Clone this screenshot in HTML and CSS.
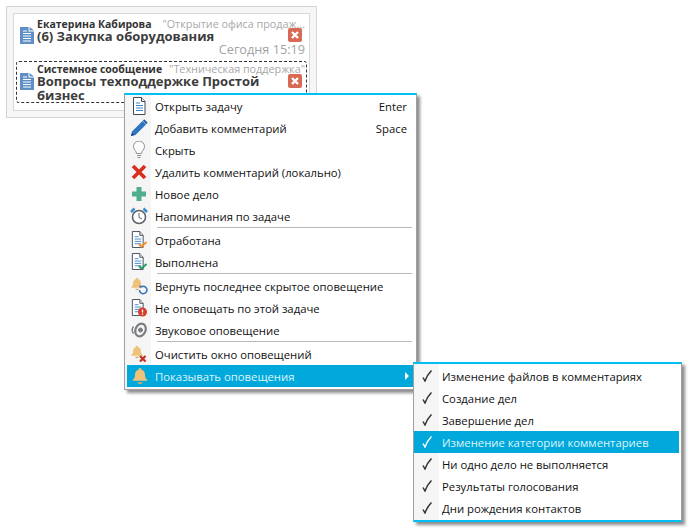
FILE: index.html
```html
<!DOCTYPE html>
<html lang="ru">
<head>
<meta charset="utf-8">
<title>Оповещения</title>
<link rel="stylesheet" href="styles.css">
</head>
<body>
<svg class="defs" width="0" height="0" aria-hidden="true">
  <defs>
    <symbol id="i-sheet" viewBox="0 0 16 18">
      <path d="M2.500.5h8l3.500 4v13h-11.500z" fill="#fff" stroke="#3f4a57"/>
      <path d="M10.500.5v4h3.500" fill="#e6eaf0" stroke="#3f4a57"/>
      <path d="M5 6h4M5 8.500h7M5 11h7M5 13.500h7" stroke="#3f86d0" fill="none"/>
    </symbol>
    <symbol id="i-bell" viewBox="0 0 16 16">
      <path d="M8 1a1.300 1.300 0 0 1 1.300 1.400c2.300.7 3.200 2.600 3.200 5 0 2 .8 3 2 4.100v.8h-13v-.8c1.200-1.100 2-2.100 2-4.100 0-2.400.9-4.300 3.200-5A1.300 1.300 0 0 1 8 1z" fill="#efc27a"/>
      <path d="M6 13.500h4a2 1.700 0 0 1-4 0z" fill="#e2a95c"/>
    </symbol>
    <symbol id="i-doc" viewBox="0 0 14 17">
      <path d="M0 0h8.500v4.500H14V17H0z" fill="#5f8fc4"/>
      <path d="M9.500 0L14 3.500H9.500z" fill="#5f8fc4"/>
      <path d="M3 6.500h8M3 9h8M3 11.500h8M3 14h8" stroke="#fff" fill="none"/>
      <path d="M3 4h4" stroke="#fff" fill="none"/>
    </symbol>
    <symbol id="i-check" viewBox="0 0 10 12">
      <path d="M1 7.500l2 3.500C4.500 7 6.500 3.500 9.500.5" fill="none" stroke="currentColor" stroke-width="1.500"/>
    </symbol>
  </defs>
</svg>

<section class="panel">
  <div class="panel-inner">
    <article class="note">
      <svg class="note-doc"><use href="#i-doc"/></svg>
      <div class="note-body">
        <div class="note-head"><span class="note-author">Екатерина Кабирова</span><span class="note-topic">"Открытие офиса продаж...</span></div>
        <div class="note-title-row"><h3 class="note-title">(6) Закупка оборудования</h3><span class="note-close"><svg viewBox="0 0 14 14"><path d="M4 4l6 6M10 4l-6 6"/></svg></span></div>
        <div class="note-time">Сегодня 15:19</div>
      </div>
    </article>
    <article class="note note-focus">
      <svg class="note-doc"><use href="#i-doc"/></svg>
      <div class="note-body">
        <div class="note-head"><span class="note-author">Системное сообщение</span><span class="note-topic">"Техническая поддержка"</span></div>
        <div class="note-title-row"><h3 class="note-title">Вопросы техподдержке Простой бизнес</h3><span class="note-close"><svg viewBox="0 0 14 14"><path d="M4 4l6 6M10 4l-6 6"/></svg></span></div>
      </div>
    </article>
  </div>
</section>

<nav class="menu">
  <div class="item"><span class="ico"><svg width="16" height="18"><use href="#i-sheet"/></svg></span><span class="label">Открыть задачу</span><span class="key">Enter</span></div>
  <div class="item"><span class="ico"><svg width="18" height="18" viewBox="0 0 18 18"><path d="M1 17l1-4.500L12.500 2l3.500 3.500L5.500 16z" fill="#2f74c0"/><path d="M13.500 1l3.500 3.500" stroke="#1f5a9e" stroke-width="2"/><path d="M1 17l1-3 2 2z" fill="#153a66"/></svg></span><span class="label">Добавить комментарий</span><span class="key">Space</span></div>
  <div class="item"><span class="ico"><svg width="16" height="18" viewBox="0 0 16 18" fill="none" stroke="#8d9296"><path d="M5.500 12.500c0-2.500-3-3.500-3-7a5.500 5.500 0 0 1 11 0c0 3.500-3 4.500-3 7z" fill="#fbfbfb"/><path d="M6 14.500h4M6.500 16.500h3"/></svg></span><span class="label">Скрыть</span></div>
  <div class="item"><span class="ico"><svg width="16" height="16" viewBox="0 0 16 16"><path d="M2 2l12 12M14 2L2 14" stroke="#d8301e" stroke-width="3.600"/></svg></span><span class="label">Удалить комментарий (локально)</span></div>
  <div class="item"><span class="ico"><svg width="16" height="16" viewBox="0 0 16 16"><path d="M8 1v14M1 8h14" stroke="#4fae8c" stroke-width="5"/></svg></span><span class="label">Новое дело</span></div>
  <div class="item"><span class="ico"><svg width="18" height="18" viewBox="0 0 18 18" fill="none"><circle cx="9" cy="10" r="6.500" stroke="#5a6168" stroke-width="1.500" fill="#fff"/><path d="M9 6v4.500l3 1.500" stroke="#5a6168"/><path d="M1 5l3.500-3.500M17 5l-3.500-3.500" stroke="#3c8ccb" stroke-width="2.500"/></svg></span><span class="label">Напоминания по задаче</span></div>
  <hr class="sep">
  <div class="item"><span class="ico"><svg width="18" height="18" viewBox="0 0 18 18"><use href="#i-sheet" width="15" height="17"/><path d="M9 13l2.500 2.500L16.500 11" fill="none" stroke="#ee9130" stroke-width="2"/></svg></span><span class="label">Отработана</span></div>
  <div class="item"><span class="ico"><svg width="18" height="18" viewBox="0 0 18 18"><use href="#i-sheet" width="15" height="17"/><path d="M9 13l2.500 2.500L16.500 11" fill="none" stroke="#2f9a63" stroke-width="2"/></svg></span><span class="label">Выполнена</span></div>
  <hr class="sep">
  <div class="item"><span class="ico"><svg width="18" height="18" viewBox="0 0 18 18"><use href="#i-bell" width="14" height="14"/><path d="M9.500 13a3.700 3.700 0 1 0 1.500-3" fill="none" stroke="#3d78b8" stroke-width="1.600"/><path d="M9 8.500l3 .5-2 2.500z" fill="#3d78b8"/></svg></span><span class="label">Вернуть последнее скрытое оповещение</span></div>
  <div class="item"><span class="ico"><svg width="18" height="18" viewBox="0 0 18 18"><use href="#i-sheet" width="15" height="17"/><circle cx="12.500" cy="13" r="4.500" fill="#d63c2a"/><path d="M12.500 10.500v3M12.500 14.500v1.200" stroke="#fff" stroke-width="1.300"/></svg></span><span class="label">Не оповещать по этой задаче</span></div>
  <div class="item"><span class="ico"><svg width="18" height="18" viewBox="0 0 18 18" fill="none" stroke="#777d82"><ellipse cx="10.500" cy="9" rx="5" ry="6.500" transform="rotate(25 10.500 9)" stroke-width="2.200"/><circle cx="10.500" cy="9" r="2" fill="#777d82"/><path d="M3.500 5.500c-1.500 2-1.500 5 0 7" stroke-width="1.400"/></svg></span><span class="label">Звуковое оповещение</span></div>
  <hr class="sep">
  <div class="item"><span class="ico"><svg width="18" height="18" viewBox="0 0 18 18"><use href="#i-bell" width="14" height="14"/><path d="M10 11l5.500 5.500M15.500 11L10 16.500" stroke="#c62c20" stroke-width="2.200"/></svg></span><span class="label">Очистить окно оповещений</span></div>
  <div class="item item-open"><span class="ico"><svg width="18" height="18"><use href="#i-bell"/></svg></span><span class="label">Показывать оповещения</span><span class="arrow"></span>
    <div class="menu submenu">
      <div class="item"><span class="ico check"><svg width="10" height="12"><use href="#i-check"/></svg></span><span class="label">Изменение файлов в комментариях</span></div>
      <div class="item"><span class="ico check"><svg width="10" height="12"><use href="#i-check"/></svg></span><span class="label">Создание дел</span></div>
      <div class="item"><span class="ico check"><svg width="10" height="12"><use href="#i-check"/></svg></span><span class="label">Завершение дел</span></div>
      <div class="item item-active"><span class="ico check"><svg width="10" height="12"><use href="#i-check"/></svg></span><span class="label">Изменение категории комментариев</span></div>
      <div class="item"><span class="ico check"><svg width="10" height="12"><use href="#i-check"/></svg></span><span class="label">Ни одно дело не выполняется</span></div>
      <div class="item"><span class="ico check"><svg width="10" height="12"><use href="#i-check"/></svg></span><span class="label">Результаты голосования</span></div>
      <div class="item"><span class="ico check"><svg width="10" height="12"><use href="#i-check"/></svg></span><span class="label">Дни рождения контактов</span></div>
    </div>
  </div>
</nav>
</body>
</html>
```

FILE: styles.css
```css
html, body { margin: 0; padding: 0; }
body {
  width: 692px;
  height: 532px;
  position: relative;
  overflow: hidden;
  background: #fff;
  font-family: "Open Sans", sans-serif;
}
.defs { position: absolute; }

.panel {
  box-sizing: border-box;
  width: 311px;
  height: 112px;
  margin: 6px 0 0 6px;
  padding: 6px;
  border: 1px solid #d4d4d4;
  background: #f6f6f6;
}
.panel-inner {
  box-sizing: border-box;
  height: 98px;
  border: 1px solid #d8d8d8;
  background: #fff;
  padding: 2px 2px 0;
  overflow: hidden;
}
.note {
  display: flex;
  gap: 3px;
  padding: 1px 2px 0 4px;
  height: 45px;
  box-sizing: border-box;
  align-items: flex-start;
}
.note-focus {
  height: 42px;
  border: 1px dashed #333;
  border-radius: 3px;
  padding: 0 1px 0 3px;
}
.note-doc { flex: none; width: 14px; height: 17px; margin-top: 10px; }
.note-focus .note-doc { margin-top: 11px; }
.note-body { flex: 1; min-width: 0; }
.note-head {
  display: flex;
  justify-content: space-between;
  gap: 6px;
  height: 13px;
  line-height: 14px;
}
.note-author { font-weight: 700; color: #333; font-size: 10.500px; white-space: nowrap; }
.note-topic { color: #a8a8a8; font-size: 10.800px; white-space: nowrap; }
.note-title-row { display: flex; justify-content: space-between; gap: 6px; }
.note-title {
  margin: 0;
  font-size: 13px;
  line-height: 13.500px;
  font-weight: 700;
  color: #3c3c3c;
}
.note-close {
  flex: none;
  width: 14px;
  height: 14px;
  margin-top: -2px;
  margin-right: 3px;
  border-radius: 2px;
  background: #d86a55;
}
.note-focus .note-close { margin-top: -1px; }
.note-close svg { display: block; width: 14px; height: 14px; fill: none; stroke: #fff; stroke-width: 2.400; }
.note-time { text-align: right; font-size: 12.700px; line-height: 14px; margin-top: -2px; color: #a3a3a3; }

.menu {
  position: absolute;
  left: 124px;
  top: 93px;
  width: 293px;
  box-sizing: border-box;
  background: linear-gradient(to right, #f5f5f5 26px, #fff 26px);
  border: 1px solid #a0a0a0;
  border-top: 2px solid #00bff3;
  padding: 0 0 2px 1px;
  box-shadow: 3px 3px 3px rgba(0, 0, 0, .45);
  font-size: 11.300px;
  color: #111;
}
.item {
  display: flex;
  align-items: center;
  height: 22px;
  margin-right: 1px;
}
.ico {
  flex: none;
  width: 25px;
  display: flex;
  justify-content: center;
  align-items: center;
}
.label { flex: 1; padding-left: 4px; white-space: nowrap; }
.key { padding-right: 8px; }
.sep {
  height: 1px;
  margin: 0 4px 1px 31px;
  border: 0;
  background: #b8b8b8;
}
.item-open, .item-active { background: #00a8dc; color: #dff4fb; }
.item-open { position: relative; margin-left: 1px; }
.item-open > .label { padding-left: 3px; }
.arrow {
  width: 0;
  height: 0;
  margin-right: 6px;
  border-left: 4px solid #fff;
  border-top: 4px solid transparent;
  border-bottom: 4px solid transparent;
}
.submenu {
  left: 286px;
  top: -3px;
  width: 269px;
  height: 160px;
  background: linear-gradient(to right, #f5f5f5 25px, #fff 25px);
  border-bottom: 2px solid #00bff3;
  padding: 1px 2px 0 0;
  color: #111;
}
.check { color: #333; }
.item-active .check { color: #fff; }
.submenu .item { margin-right: 0; }
.submenu .label { padding-left: 3px; }
```
